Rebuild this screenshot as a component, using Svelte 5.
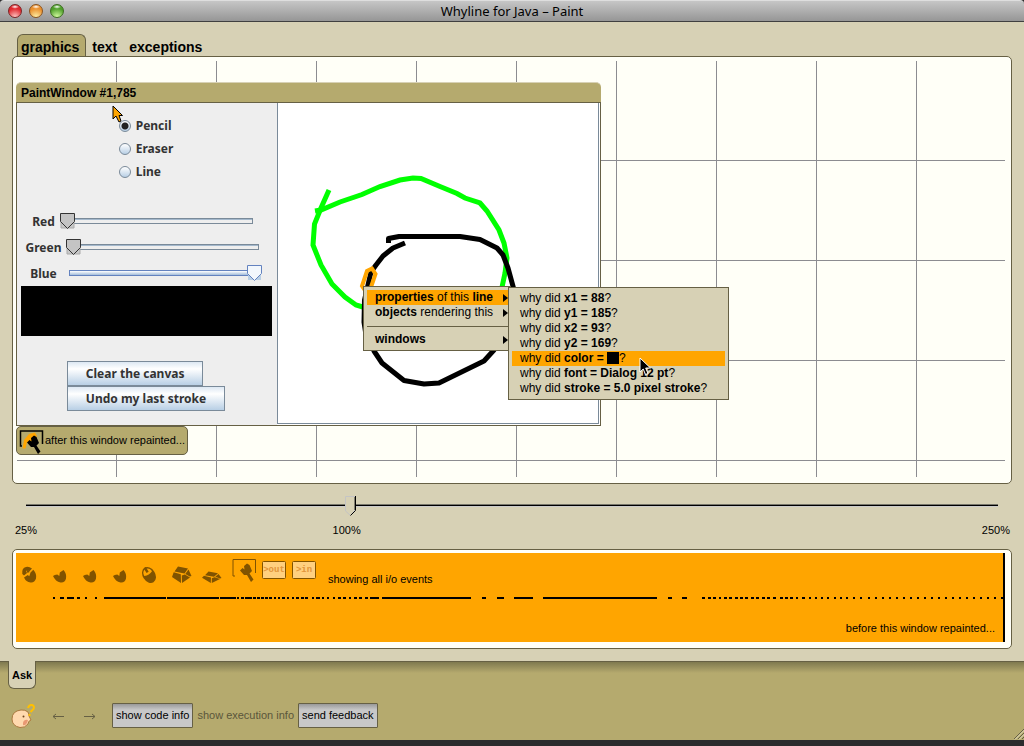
<script>
  let tool = $state('Pencil');
  let zoom = $state(100);
  const tabs = ['graphics', 'text', 'exceptions'];
  const tools = ['Pencil', 'Eraser', 'Line'];
  const channels = $state([
    { name: 'Red', value: 0 },
    { name: 'Green', value: 0 },
    { name: 'Blue', value: 255 }
  ]);
  const questions = [
    { fact: 'x1 = 88' },
    { fact: 'y1 = 185' },
    { fact: 'x2 = 93' },
    { fact: 'y2 = 169' },
    { fact: 'color = ', swatch: true },
    { fact: 'font = Dialog 12 pt' },
    { fact: 'stroke = 5.0 pixel stroke' }
  ];

  // start and end of each run of i/o events along the time line
  const runs = [
    [37, 39], [44, 48], [51, 58], [61, 64], [69, 71], [79, 81], [88, 150], [151, 203], [204, 220],
    [221, 223], [225, 228], [229, 236], [237, 240], [241, 244], [245, 248], [249, 252], [253, 256],
    [258, 260], [262, 264], [266, 269], [271, 273], [276, 278], [280, 283], [285, 288], [289, 292],
    [296, 298], [300, 304], [306, 308], [311, 313], [317, 319], [322, 325], [327, 330], [333, 335],
    [338, 341], [343, 346], [349, 352], [354, 363], [366, 455], [466, 470], [481, 488], [498, 517],
    [527, 641], [652, 656], [666, 671], [686, 689], [692, 695], [697, 700], [703, 705], [708, 711],
    [713, 716], [719, 722], [724, 727], [729, 732], [735, 738], [740, 743], [746, 749], [751, 754],
    [757, 760], [764, 767], [769, 772], [774, 777], [780, 782], [786, 789],
    ...[794, 800, 806, 812, 819, 825, 831, 838, 845, 853, 860, 867, 874, 881, 888, 895, 902, 909, 916, 923, 930, 937, 944, 951, 958, 965, 972, 979, 986].map((c) => [c - 1, c + 1])
  ];
</script>

{#snippet brush()}
  <path d="M14 12.500 L16.500 10 L18.500 11.500 L18 8 L21 5.500 L23.500 7 L26 13 L23.500 15.500 L27.500 21.500 L25 24 L21 17 L18 17 Z" />
{/snippet}

<div class="app">
  <header class="titlebar">
    <div class="lights">
      <button class="light red" aria-label="Close"></button>
      <button class="light amber" aria-label="Minimize"></button>
      <button class="light green" aria-label="Zoom"></button>
    </div>
    <h1>Whyline for Java – Paint</h1>
  </header>

  <main>
    <nav class="tabs">
      {#each tabs as t, i}
        <button class:active={i === 0}>{t}</button>
      {/each}
    </nav>

    <section class="panel">
      <div class="stage">
        <div class="window">
          <h2>PaintWindow #1,785</h2>
          <div class="window-body">
            <div class="controls">
              <div class="radios">
                {#each tools as t}
                  <label><input type="radio" name="tool" value={t} bind:group={tool} />{t}</label>
                {/each}
              </div>
              <div class="channels">
                {#each channels as c}
                  <label class="channel" class:lit={c.name === 'Blue'}>
                    {c.name}<input type="range" min="0" max="255" bind:value={c.value} />
                  </label>
                {/each}
              </div>
              <div class="preview"></div>
              <div class="actions">
                <button>Clear the canvas</button>
                <button>Undo my last stroke</button>
              </div>
            </div>
            <svg class="drawing" viewBox="278 103 320 320" aria-hidden="true">
              <g fill="none" stroke-width="5">
                <path stroke="#0f0" d="M329 190 L321 208 L314.500 224 L313 245 L321 265 L332 284 L345 297 L356 305 L366 308" />
                <path stroke="#0f0" d="M315 211 L321 210 L340 202 L362 194.500 L380 186.500 L400 180 L413 178 L421 178.500 L440 186.500 L457 193.500 L465 198 L480 203 L487 211 L499 230 L504 243 L507 258 L505 273 L501 292" />
                <path stroke="#000" stroke-linejoin="round" d="M388.500 243 L388.500 238.500 L399 236.500 L460 236.500 L480 239.500 L497 248 L503 255 L508 268 L514 290 L512 320 L494 350 L484 361 L439 383 L424 384 L404 380.500 L382 363 L374 351 L366 335 L364 322 L364.500 300 L371 272 L376 265 L383 256 L393 248 L405 243" />
                <path stroke="#ffa500" stroke-width="4" d="M366 292 L362 286 L367 271 L372 268.500 L375.500 274 L370 290" />
              </g>
            </svg>
          </div>
        </div>

        <div class="badge">
          <svg width="26" height="26" viewBox="5 0 26 26" aria-hidden="true">
            <path d="M9 18 H7.500 V3 H29.500 V16" fill="none" stroke="#000" stroke-width="1.500" />
            <path d="M11 12 L16 6 L22 4.500 L24 8 L20 12 L17 15 L14 14 L12.500 20.500 H9.500 L10.500 15 Z" fill="#ffa500" />
            <g transform="translate(0 2)">{@render brush()}</g>
          </svg>
          <span>after this window repainted...</span>
        </div>

        <svg class="pointer tool-pointer" width="14" height="20" viewBox="0 0 14 20" aria-hidden="true">
          <path d="M1 1 V14 L4 11 L7 17 L9 16 L7 10.500 H10.500 Z" fill="#ffa500" stroke="#000" />
        </svg>

        <div class="menu context">
          <button class="on"><span><b>properties</b> of this <b>line</b></span><i></i></button>
          <button><span><b>objects</b> rendering this</span><i></i></button>
          <hr />
          <button><b>windows</b><i></i></button>
        </div>
        <div class="menu submenu">
          {#each questions as q}
            <button class:on={q.swatch}><span>why did <b>{q.fact}</b>{#if q.swatch}<em></em>{/if}?</span></button>
          {/each}
        </div>
        <svg class="pointer mouse-pointer" width="14" height="20" viewBox="0 0 14 20" aria-hidden="true">
          <path d="M1 1 V15 L4.200 12 L6.500 17.500 L9 16.500 L6.700 11 H11.500 Z" fill="#000" stroke="#fff" />
        </svg>
      </div>
    </section>

    <div class="zoom">
      <input type="range" min="25" max="250" bind:value={zoom} aria-label="Zoom" />
      <div class="marks"><span>25%</span><span>100%</span><span>250%</span></div>
    </div>

    <section class="panel events">
      <div class="track">
        <div class="filters">
          {#each [0, 1, 2, 3, 4] as n}
            <svg width="30" height="26" viewBox="0 0 30 26" aria-hidden="true">
              {#if n === 0}
                <path d="M6.300 16 Q5.500 10 10 9 Q13 8.300 16 10.500 L13.500 13.300 L12 12 L10 13 L11 15 L8 17.500 Z" />
                <path d="M8 19.500 L11.800 17 L13.300 18.300 L14.500 14.500 L17.300 11.800 Q21 16 20 20.500 Q18.500 25 14.500 24.500 Q10 24 8 19.500 Z" />
                <path d="M10.500 12.500 L12.500 11.500 L13.500 14 L11.500 15 Z" />
              {:else if n === 4}
                <g transform="rotate(-32 13 17)">
                  <ellipse cx="13" cy="17" rx="6.300" ry="8.500" />
                  <path d="M13 10 C9.500 10.500 8.500 13 8.500 15.500 Q13 17.500 17.500 15.500 C17.500 13 16.500 10.500 13 10 Z" fill="#ffa500" />
                  <path d="M12 8.500 H14.500 V14 H12 Z" />
                </g>
              {:else}
                <path d="M7 18 Q8.500 16.500 11.300 16.500 L13.300 18 L13.800 14.500 L17.500 12 Q21 16 20 20.500 Q19 25 14.500 24.500 Q9.500 23.500 7 18 Z" />
              {/if}
            </svg>
          {/each}
          <svg width="30" height="26" viewBox="0 0 30 26" aria-hidden="true">
            <path d="M12 8.500 L22 10.500 L18.500 15.500 L8.500 13.500 Z M7.700 14.300 L14.800 16.300 L15 25 L6 19 Z M15.800 17.500 L18.800 16.500 L24 19.500 L16 25 Z M22.500 11.500 L25.500 18 L23.800 18.500 L19.300 16 Z" />
          </svg>
          <svg width="30" height="26" viewBox="0 0 30 26" aria-hidden="true">
            <path d="M12.500 13.500 L22 15.300 L18 18.800 L9 17.300 Z M8 17.800 L15 19.500 L14.800 25 L6 19.800 Z M15.800 20.300 L18.700 19.300 L24 21 L15.800 25 Z M22.500 16 L25.500 20 L24 20.500 L19.300 18.800 Z" />
          </svg>
          <svg width="30" height="26" viewBox="0 0 30 26" aria-hidden="true">
            <path d="M9 18 H7 V1.500 H29.500 V15" fill="none" stroke="#805300" />
            {@render brush()}
          </svg>
          {#each ['>out', '>in'] as label}
            <svg width="30" height="26" viewBox="0 0 30 26" aria-hidden="true">
              <rect x="6.500" y="3.500" width="23" height="17" rx="1" fill="#ffd07f" stroke="#805300" />
              <text x="18" y="14" text-anchor="middle">{label}</text>
            </svg>
          {/each}
          <span>showing all i/o events</span>
        </div>
        <svg class="line" width="100%" height="2" aria-hidden="true">
          {#each runs as [a, b]}<rect x={a} y="0" width={b - a} height="2" />{/each}
        </svg>
        <p>before this window repainted...</p>
      </div>
    </section>
  </main>

  <footer>
    <button class="ask">Ask</button>
    <div class="toolbar">
      <svg width="26" height="26" viewBox="0 0 26 26" aria-hidden="true">
        <path d="M10 7 Q14 6.500 17 9 Q18 11 18 13 L20 17 Q17 18 17 21 Q14 25 9 24.500 Q1 23 1 16 Q1 8 10 7 Z" fill="#ffd9ae" stroke="#aa793f" />
        <path d="M12 20 Q13 16 17 17 L16 20 Q14 23 12 22 Z" fill="#e99873" />
        <circle cx="12.500" cy="13.500" r="1" fill="#70451d" />
        <path d="M17 5 Q18 1.500 21 2 Q24 3 22.500 6 L19.500 9" fill="none" stroke="#ffc000" stroke-width="2" />
        <circle cx="18.500" cy="12" r="1.200" fill="#ffc000" />
      </svg>
      <button class="arrow" aria-label="Back"><svg width="12" height="8" viewBox="0 0 12 8"><path d="M12 4.500 H1 M4 2 L1 4.500 L4 7" /></svg></button>
      <button class="arrow" aria-label="Forward"><svg width="12" height="8" viewBox="0 0 12 8"><path d="M0 4.500 H11 M8 2 L11 4.500 L8 7" /></svg></button>
      <div class="commands">
        <button>show code info</button>
        <button class="off" disabled>show execution info</button>
        <button>send feedback</button>
      </div>
      <svg class="grip" width="12" height="12" viewBox="0 0 12 12" aria-hidden="true">
        <path d="M1 11 L11 1 M5 11 L11 5 M9 11 L11 9" stroke="#666044" />
        <path d="M2 11.500 L11.500 2 M6 11.500 L11.500 6" stroke="#e2dcc0" />
      </svg>
    </div>
  </footer>
</div>

<style>
  :global(body) { background: #2b2b2d; }
  .app { box-sizing: border-box; min-height: 100vh; padding-bottom: 6px; display: flex; flex-direction: column; font: 11px/15px 'Liberation Sans', Arial, sans-serif; color: #000; background: #2b2b2d; }
  button { font: inherit; color: inherit; border: 0; padding: 0; margin: 0; background: none; white-space: nowrap; }
  input { margin: 0; }
  svg { flex: none; }

  .titlebar { box-sizing: border-box; height: 22px; display: grid; grid-template-columns: 1fr auto 1fr; align-items: center; border-top: 1px solid #dedede; border-bottom: 1px solid #404040; border-radius: 4px 4px 0 0; background: linear-gradient(#c6c6c6, #969696); }
  .lights { display: flex; gap: 7px; padding-left: 8px; }
  .light { width: 14px; height: 14px; border-radius: 50%; border: 1px solid; }
  .red { border-color: #7c2425; background: radial-gradient(ellipse 4px 2px at 50% 15%, #fff, transparent), radial-gradient(circle at 50% 100%, #ffc9c5, #e0262c 65%); }
  .amber { border-color: #8a5420; background: radial-gradient(ellipse 4px 2px at 50% 15%, #fff, transparent), radial-gradient(circle at 50% 100%, #fff2a8, #ea8f2c 65%); }
  .green { border-color: #3d6d20; background: radial-gradient(ellipse 4px 2px at 50% 15%, #fff, transparent), radial-gradient(circle at 50% 100%, #d8ffa4, #4f9f2b 65%); }
  h1 { margin: 0; font: 13px/20px 'Noto Sans', sans-serif; }

  main { flex: 1; padding: 12px; background: #d7d1b5; }
  .tabs { display: flex; gap: 5px; padding-left: 5px; }
  .tabs button { box-sizing: border-box; height: 22px; font-size: 14px; font-weight: bold; border: 1px solid transparent; border-bottom: 0; border-radius: 6px 6px 0 0; }
  .tabs button + button { padding: 3px 5px 0 0; }
  .tabs .active { padding: 3px 6px 0 3px; border-color: #666044; background: #b5aa6e; }

  .panel { border: 1px solid #666044; border-radius: 5px; background: #fffff7; padding: 3px 6px 6px 3px; }
  .stage { position: relative; isolation: isolate; padding: 22px 0; }
  .stage::before { content: ''; position: absolute; z-index: -1; inset: 1px 0 0 1px; background:
    linear-gradient(90deg, transparent 99px, #8c8c90 99px) 0 0 / 100px 100%,
    linear-gradient(transparent 99px, #8c8c90 99px) 0 0 / 100% 100px; }

  .window { width: fit-content; }
  h2 { box-sizing: border-box; margin: 0; height: 20px; padding: 2px 5px; font-size: 12px; line-height: 16px; border-top: 1px solid #d7d1b5; border-radius: 5px 5px 0 0; background: #b5aa6e; }
  .window-body { display: flex; border: 1px solid #666044; background: #fff; }
  .controls { box-sizing: border-box; width: 260px; display: flex; flex-direction: column; align-items: center; padding: 11px 2px 13px 0; background: #eee; font: bold 12px/23px 'Noto Sans', 'Open Sans', sans-serif; color: #333; }
  .radios { display: flex; flex-direction: column; }
  .radios label { display: flex; align-items: center; gap: 5px; }
  .radios input { appearance: none; width: 12px; height: 12px; border: 1px solid #7a8a99; border-radius: 50%; background: linear-gradient(#fff, #b8cfe5); }
  .radios input:checked { background: radial-gradient(circle, #222 3px, transparent 4px), linear-gradient(#fff, #b8cfe5); }
  .channels { display: flex; flex-direction: column; align-items: center; padding-top: 25px; }
  .channel { display: flex; align-items: center; gap: 5px; height: 26px; }
  .channel input { appearance: none; width: 200px; height: 16px; background:
    linear-gradient(#7a8a99, #7a8a99) 7px 5px / 186px 1px no-repeat,
    linear-gradient(#a3b8cc, #a3b8cc) 7px 6px / 185px 1px no-repeat,
    linear-gradient(#7a8a99, #7a8a99) 7px 10px / 186px 1px no-repeat,
    linear-gradient(#7a8a99, #7a8a99) 192px 5px / 1px 6px no-repeat; }
  .channel input::-webkit-slider-thumb { appearance: none; width: 15px; height: 16px; background: url("data:image/svg+xml,%3Csvg xmlns='http://www.w3.org/2000/svg' width='15' height='16'%3E%3Cpath d='M1 1H14V15H1Z' fill='%23c8c8c8' stroke='%23aaa'/%3E%3Cpath d='M.5 8.500V.5H14.500V8.500L7.500 15.500Z' fill='%23c4c4c4' stroke='%23333'/%3E%3C/svg%3E"); }
  .channel.lit input { background:
    linear-gradient(#6382bf, #6382bf) 7px 5px / 186px 1px no-repeat,
    linear-gradient(#6382bf, #6382bf) 7px 10px / 186px 1px no-repeat,
    linear-gradient(#6382bf, #6382bf) 7px 5px / 1px 6px no-repeat,
    linear-gradient(#fff, #a3bddb) 7px 6px / 186px 4px no-repeat; }
  .channel.lit input::-webkit-slider-thumb { background: url("data:image/svg+xml,%3Csvg xmlns='http://www.w3.org/2000/svg' width='15' height='16'%3E%3Cpath d='M1 1H14V15H1Z' fill='%23b8cfe5'/%3E%3Cpath d='M.5 8.500V.5H14.500V8.500L7.500 15.500Z' fill='%23f2f7fc' stroke='%236382bf'/%3E%3C/svg%3E"); }
  .preview { align-self: stretch; height: 50px; margin: 0 3px 25px 4px; background: #000; }
  .actions { display: flex; flex-direction: column; align-items: flex-start; }
  .actions button { box-sizing: border-box; height: 25px; padding: 0 18px; border: 1px solid #7a8a99; background: linear-gradient(#dde8f3, #fff 30%, #b8cfe5); line-height: 22px; }
  .drawing { display: block; width: 320px; height: 320px; margin: 0 1px 1px 0; border: 1px solid #7a8a99; border-top: 0; }

  .badge { box-sizing: border-box; width: fit-content; height: 29px; display: flex; align-items: center; gap: 1px; padding: 0 2px 0 1px; border: 1px solid #666044; border-radius: 5px; background: #b5aa6e; }

  .pointer { position: absolute; }
  .tool-pointer { left: 96px; top: 45px; }
  .mouse-pointer { left: 623px; top: 297px; }

  .menu { position: absolute; border: 1px solid #666044; padding: 3px; background: #d7d1b5; font-size: 12px; }
  .menu button { display: flex; align-items: center; justify-content: space-between; width: 100%; height: 15px; padding-left: 8px; text-align: left; }
  .menu .on { background: #ffa500; }
  .menu hr { height: 1px; margin: 6px 0 5px; border: 0; background: #666044; }
  .context { left: 347px; top: 226px; width: 141px; padding-right: 2px; }
  .context i { border: 4px solid transparent; border-left: 5px solid #000; border-right: 0; }
  .submenu { left: 492px; top: 227px; width: 213px; }
  .submenu em { display: inline-block; width: 12px; height: 12px; background: #000; vertical-align: -2px; }

  .zoom { padding: 12px 0 11px; }
  .zoom input { display: block; appearance: none; width: calc(100% - 18px); height: 20px; margin: 0 9px; background: linear-gradient(#77766c 1px, #000 1px 2px, #ccc 2px 3px, transparent 3px) center 8px / calc(100% - 10px) 4px no-repeat; }
  .zoom input::-webkit-slider-thumb { appearance: none; width: 11px; height: 20px; background: url("data:image/svg+xml,%3Csvg xmlns='http://www.w3.org/2000/svg' width='11' height='20'%3E%3Cpath d='M.5 15V.5H10V14L5.500 19.500Z' fill='%23d7d1b5' stroke='%23c4c4c4'/%3E%3Cpath d='M10.500 0V14.500L5.500 19.500' fill='none' stroke='%23000'/%3E%3Cpath d='M9.500 1V14' stroke='%23807e70'/%3E%3C/svg%3E"); }
  .marks { display: grid; grid-template-columns: 1fr 1fr 1fr; padding: 7px 2px 0 3px; }
  .marks span { grid-row: 1; }
  .marks span:nth-child(1) { grid-column: 1; }
  .marks span:nth-child(2) { grid-column: 1 / 3; justify-self: center; }
  .marks span:nth-child(3) { grid-column: 3; justify-self: end; }

  .track { background: #ffa500; border-right: 2px solid #000; padding: 5px 0 6px; }
  .filters { display: flex; align-items: flex-end; fill: #805300; }
  .filters text { font: bold 9px 'Liberation Mono', monospace; fill: #e2953a; }
  .filters span { padding-left: 12px; line-height: 13px; margin-bottom: -2px; }
  .line { display: block; margin-top: 13px; }
  .track p { margin: 22px 8px 0; text-align: right; }

  footer { border-top: 1px solid #666044; background: linear-gradient(#7f794f, #b5aa6e 11px); }
  .ask { display: block; box-sizing: border-box; height: 28px; margin: -1px 0 0 8px; padding: 1px 3px 0; font-weight: bold; border: 1px solid #666044; border-top: 0; border-radius: 0 0 6px 6px; background: #d7d1b5; }
  .toolbar { display: flex; align-items: center; padding: 14px 0 12px 11px; height: 25px; }
  .arrow { width: 32px; margin-left: 5px; height: 25px; display: flex; align-items: center; justify-content: center; }
  .arrow + .arrow { margin-left: 0; }
  .arrow svg { fill: none; stroke: #666044; }
  .commands { display: flex; gap: 4px; margin-left: 6px; }
  .commands button { box-sizing: border-box; height: 25px; padding: 0 3px; border: 1px solid #666044; border-radius: 1px; background: linear-gradient(#999, #c8c8c8 6px); }
  .commands .off { padding: 0; border: 0; background: none; color: #5b563a; }
  .grip { margin: auto -1px -12px auto; }
</style>
